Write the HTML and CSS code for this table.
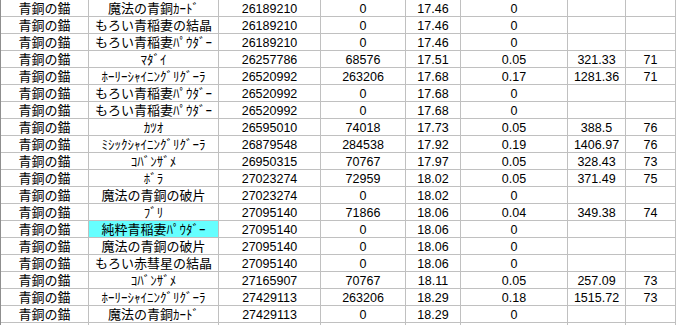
FILE: index.html
```html
<!DOCTYPE html>
<html lang="ja">
<head>
<meta charset="utf-8">
<title>Sheet</title>
<link rel="stylesheet" href="styles.css">
</head>
<body>
<div class="sheet">
  <div class="row"><div class="c jp">青銅の錨</div><div class="c jp">魔法の青銅ｶｰﾄﾞ</div><div class="c n">26189210</div><div class="c n">0</div><div class="c n">17.46</div><div class="c n">0</div><div class="c n"></div><div class="c n"></div></div>
  <div class="row"><div class="c jp">青銅の錨</div><div class="c jp">もろい青稲妻の結晶</div><div class="c n">26189210</div><div class="c n">0</div><div class="c n">17.46</div><div class="c n">0</div><div class="c n"></div><div class="c n"></div></div>
  <div class="row"><div class="c jp">青銅の錨</div><div class="c jp">もろい青稲妻ﾊﾟｳﾀﾞｰ</div><div class="c n">26189210</div><div class="c n">0</div><div class="c n">17.46</div><div class="c n">0</div><div class="c n"></div><div class="c n"></div></div>
  <div class="row"><div class="c jp">青銅の錨</div><div class="c jp">ﾏﾀﾞｲ</div><div class="c n">26257786</div><div class="c n">68576</div><div class="c n">17.51</div><div class="c n">0.05</div><div class="c n">321.33</div><div class="c n">71</div></div>
  <div class="row"><div class="c jp">青銅の錨</div><div class="c jp">ﾎｰﾘｰｼｬｲﾆﾝｸﾞﾘｸﾞｰﾗ</div><div class="c n">26520992</div><div class="c n">263206</div><div class="c n">17.68</div><div class="c n">0.17</div><div class="c n">1281.36</div><div class="c n">71</div></div>
  <div class="row"><div class="c jp">青銅の錨</div><div class="c jp">もろい青稲妻ﾊﾟｳﾀﾞｰ</div><div class="c n">26520992</div><div class="c n">0</div><div class="c n">17.68</div><div class="c n">0</div><div class="c n"></div><div class="c n"></div></div>
  <div class="row"><div class="c jp">青銅の錨</div><div class="c jp">もろい青稲妻ﾊﾟｳﾀﾞｰ</div><div class="c n">26520992</div><div class="c n">0</div><div class="c n">17.68</div><div class="c n">0</div><div class="c n"></div><div class="c n"></div></div>
  <div class="row"><div class="c jp">青銅の錨</div><div class="c jp">ｶﾂｵ</div><div class="c n">26595010</div><div class="c n">74018</div><div class="c n">17.73</div><div class="c n">0.05</div><div class="c n">388.5</div><div class="c n">76</div></div>
  <div class="row"><div class="c jp">青銅の錨</div><div class="c jp">ﾐｼｯｸｼｬｲﾆﾝｸﾞﾘｸﾞｰﾗ</div><div class="c n">26879548</div><div class="c n">284538</div><div class="c n">17.92</div><div class="c n">0.19</div><div class="c n">1406.97</div><div class="c n">76</div></div>
  <div class="row"><div class="c jp">青銅の錨</div><div class="c jp">ｺﾊﾞﾝｻﾞﾒ</div><div class="c n">26950315</div><div class="c n">70767</div><div class="c n">17.97</div><div class="c n">0.05</div><div class="c n">328.43</div><div class="c n">73</div></div>
  <div class="row"><div class="c jp">青銅の錨</div><div class="c jp">ﾎﾞﾗ</div><div class="c n">27023274</div><div class="c n">72959</div><div class="c n">18.02</div><div class="c n">0.05</div><div class="c n">371.49</div><div class="c n">75</div></div>
  <div class="row"><div class="c jp">青銅の錨</div><div class="c jp">魔法の青銅の破片</div><div class="c n">27023274</div><div class="c n">0</div><div class="c n">18.02</div><div class="c n">0</div><div class="c n"></div><div class="c n"></div></div>
  <div class="row"><div class="c jp">青銅の錨</div><div class="c jp">ﾌﾞﾘ</div><div class="c n">27095140</div><div class="c n">71866</div><div class="c n">18.06</div><div class="c n">0.04</div><div class="c n">349.38</div><div class="c n">74</div></div>
  <div class="row"><div class="c jp">青銅の錨</div><div class="c jp hl">純粋青稲妻ﾊﾟｳﾀﾞｰ</div><div class="c n">27095140</div><div class="c n">0</div><div class="c n">18.06</div><div class="c n">0</div><div class="c n"></div><div class="c n"></div></div>
  <div class="row"><div class="c jp">青銅の錨</div><div class="c jp">魔法の青銅の破片</div><div class="c n">27095140</div><div class="c n">0</div><div class="c n">18.06</div><div class="c n">0</div><div class="c n"></div><div class="c n"></div></div>
  <div class="row"><div class="c jp">青銅の錨</div><div class="c jp">もろい赤彗星の結晶</div><div class="c n">27095140</div><div class="c n">0</div><div class="c n">18.06</div><div class="c n">0</div><div class="c n"></div><div class="c n"></div></div>
  <div class="row"><div class="c jp">青銅の錨</div><div class="c jp">ｺﾊﾞﾝｻﾞﾒ</div><div class="c n">27165907</div><div class="c n">70767</div><div class="c n">18.11</div><div class="c n">0.05</div><div class="c n">257.09</div><div class="c n">73</div></div>
  <div class="row"><div class="c jp">青銅の錨</div><div class="c jp">ﾎｰﾘｰｼｬｲﾆﾝｸﾞﾘｸﾞｰﾗ</div><div class="c n">27429113</div><div class="c n">263206</div><div class="c n">18.29</div><div class="c n">0.18</div><div class="c n">1515.72</div><div class="c n">73</div></div>
  <div class="row"><div class="c jp">青銅の錨</div><div class="c jp">魔法の青銅ｶｰﾄﾞ</div><div class="c n">27429113</div><div class="c n">0</div><div class="c n">18.29</div><div class="c n">0</div><div class="c n"></div><div class="c n"></div></div>
  <div class="row"><div class="c jp"></div><div class="c jp"></div><div class="c n"></div><div class="c n"></div><div class="c n"></div><div class="c n"></div><div class="c n"></div><div class="c n"></div></div>
</div>
</body>
</html>
```

FILE: styles.css
```css
html, body {
  margin: 0;
  padding: 0;
  background: #ffffff;
  overflow: hidden;
}

.sheet {
  width: 676px;
  box-sizing: border-box;
  display: flex;
  flex-direction: column;
  gap: 1px;
  background: #c0c0c0;
  border-left: 1px solid #8f8f8f;
  padding: 0 1px 1px 0;
}

.row {
  display: grid;
  grid-template-columns: 87px 129px 101px 84px 54px 106px 57px 49px;
  grid-auto-rows: 16px;
  gap: 1px;
  height: 16px;
}

.c {
  background: #ffffff;
  color: #000000;
  text-align: center;
  white-space: nowrap;
  box-sizing: border-box;
  height: 16px;
}

.n {
  font-family: "Liberation Sans", Arial, sans-serif;
  font-size: 12.5px;
  line-height: 14px;
  padding-top: 2px;
}

.jp {
  font-family: "Noto Sans CJK JP", "Noto Sans", sans-serif;
  font-size: 13px;
  line-height: 16px;
}

.hl {
  background: #66ffff;
}
```
